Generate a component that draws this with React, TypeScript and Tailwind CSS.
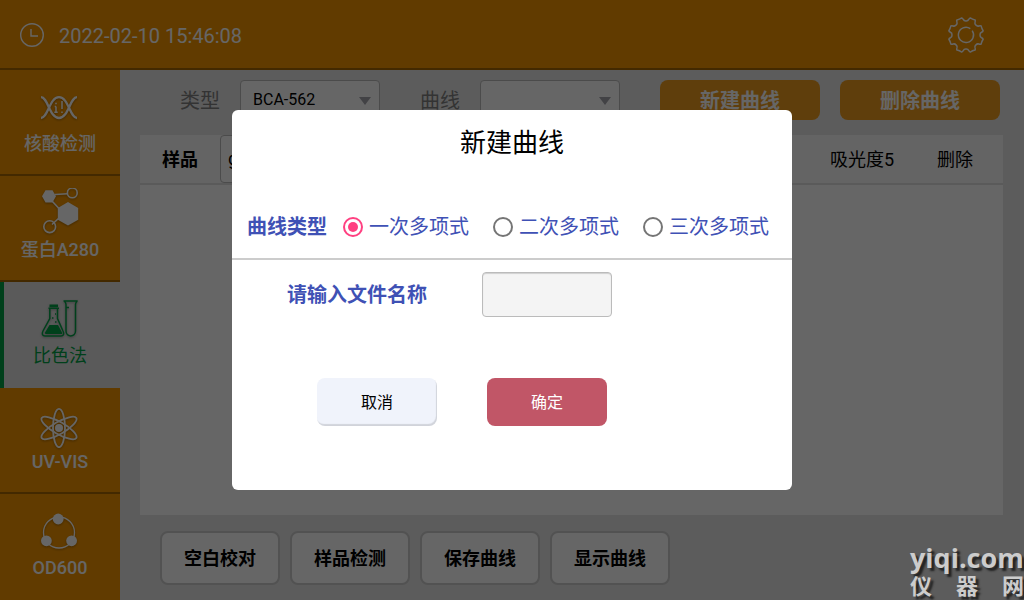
import { useState } from 'react'
import type { ReactNode } from 'react'

const ICON = 'h-12 w-10 drop-shadow-[0_1px_1px_rgba(0,0,0,0.3)]'

function DnaIcon() {
  return (
    <svg viewBox="0 0 40 48" className={ICON} fill="none" stroke="currentColor" strokeWidth="2.3" aria-hidden="true">
      <path d="M1 15.200C8 15.200 9.500 36 19 36S30 15.200 37 15.200" />
      <path d="M1 36C8 36 9.500 15.200 19 15.200S30 36 37 36" />
      <path d="M16 24.500v5.800M14.300 30.300h3.400M14.700 24.500H16M16 20.800v1.500M22 19v8M22 29.500v1.600" strokeWidth="1.500" />
    </svg>
  )
}

function MoleculeIcon() {
  return (
    <svg viewBox="0 0 40 48" className={ICON} fill="none" stroke="currentColor" strokeWidth="1.6" aria-hidden="true">
      <path d="M2 8.300l3.500-6.100h7L16 8.300l-3.500 6.100h-7z" fill="currentColor" stroke="none" />
      <path d="M28 14l10.200 5.900v11.800L28 37.500l-10.200-5.800V19.900z" fill="currentColor" stroke="none" />
      <circle cx="32.300" cy="4.900" r="4.900" />
      <circle cx="9.700" cy="38.700" r="5.900" />
      <path d="M15 6.500l12.500-.7M12 13l7 7.500M12 36.500l7-6.500" />
    </svg>
  )
}

function FlaskIcon() {
  return (
    <svg viewBox="0 0 40 48" className={ICON} fill="none" stroke="currentColor" strokeWidth="1.5" aria-hidden="true">
      <path d="M9.500 11.800h8.500" strokeWidth="2.600" />
      <path d="M8.500 14.300h10.500M9.800 15v9.500L3 37c-1.500 3-.5 5 2 5h16c2.500 0 3.500-2 2-5l-5.500-12.500V15" />
      <path d="M9.500 31h8.500l4 7.500c.5 1 0 1.500-.8 1.500H6c-1 0-1.500-.8-1-1.500z" fill="currentColor" stroke="none" />
      <path d="M12 24h1.500M15 28h1.500M15 20h1" />
      <path d="M23.500 7h14.200M24.500 7.500c1.500 1 1.500 2 1.500 3V37c0 6.500 9.500 6.500 9.500 0V10.500c0-1 0-2 1.500-3M26 13.500h3" />
    </svg>
  )
}

function AtomIcon() {
  return (
    <svg viewBox="0 0 40 48" className={ICON} fill="none" stroke="currentColor" strokeWidth="1.8" aria-hidden="true">
      <ellipse cx="19" cy="28" rx="6" ry="19.200" />
      <ellipse cx="19" cy="28" rx="6" ry="20" transform="rotate(60 19 28)" />
      <ellipse cx="19" cy="28" rx="6" ry="20" transform="rotate(-60 19 28)" />
      <circle cx="19" cy="28" r="4" fill="currentColor" stroke="none" />
    </svg>
  )
}

function OrbitIcon() {
  return (
    <svg viewBox="0 0 40 48" className={ICON} fill="none" stroke="currentColor" strokeWidth="1.3" aria-hidden="true">
      <circle cx="19" cy="26.500" r="15.500" />
      <g fill="currentColor" stroke="none">
        <circle cx="18.200" cy="13" r="5.400" />
        <circle cx="6.400" cy="34.800" r="5.400" />
        <circle cx="31.600" cy="34.800" r="5.400" />
      </g>
    </svg>
  )
}

function ClockIcon() {
  return (
    <svg viewBox="0 0 24 24" className="size-6" fill="none" stroke="currentColor" strokeWidth="1.400" aria-hidden="true">
      <circle cx="12" cy="12" r="11.300" />
      <path d="M11 6v7h7" />
    </svg>
  )
}

// eight teeth, each step draws one notch and the tooth to its right
const gearPath = () => {
  const at = (deg: number, r: number) => {
    const a = (deg - 90) * (Math.PI / 180)
    return `${(18 + r * Math.cos(a)).toFixed(2)} ${(18 + r * Math.sin(a)).toFixed(2)}`
  }
  let d = `M${at(-14, 17.6)}`
  for (let k = 0; k < 360; k += 45) {
    d += `Q${at(k - 11, 17.2)} ${at(k - 10, 15.8)}Q${at(k - 8, 14)} ${at(k, 14)}`
    d += `Q${at(k + 8, 14)} ${at(k + 10, 15.8)}Q${at(k + 11, 17.2)} ${at(k + 14, 17.6)}`
    d += `Q${at(k + 22.5, 17)} ${at(k + 31, 17.6)}`
  }
  return d + 'Z'
}

function GearIcon() {
  return (
    <svg viewBox="0 0 36 36" className="size-9" fill="none" stroke="currentColor" strokeWidth="1.500" aria-hidden="true">
      <path d={gearPath()} />
      <path d="M22.300 11.700A7.600 7.600 0 1 0 24.200 13.600" />
    </svg>
  )
}

const navItems: { id: string; label: string; icon: ReactNode }[] = [
  { id: 'dna', label: '核酸检测', icon: <DnaIcon /> },
  { id: 'a280', label: '蛋白A280', icon: <MoleculeIcon /> },
  { id: 'color', label: '比色法', icon: <FlaskIcon /> },
  { id: 'uv', label: 'UV-VIS', icon: <AtomIcon /> },
  { id: 'od', label: 'OD600', icon: <OrbitIcon /> },
]

const curveTypes = ['一次多项式', '二次多项式', '三次多项式']
const actions = ['空白校对', '样品检测', '保存曲线', '显示曲线']

function Picker({ id, label, options }: { id: string; label: string; options: string[] }) {
  return (
    <div className="flex items-center gap-5">
      <label htmlFor={id} className="pt-0.5 text-xl text-[#808080]">{label}</label>
      <div className="relative">
        <select id={id} className="h-10 w-35 appearance-none rounded border border-[#bbb] bg-white pl-3 text-base text-black">
          {options.map(o => <option key={o}>{o}</option>)}
        </select>
        <svg viewBox="0 0 12 8" className="pointer-events-none absolute top-[17px] right-[9px] h-2 w-3 fill-[#a5a5ad]" aria-hidden="true">
          <path d="M0 0h12L6 8z" />
        </svg>
      </div>
    </div>
  )
}

export default function App() {
  const [active, setActive] = useState('color')
  const [curveType, setCurveType] = useState(curveTypes[0])
  const [fileName, setFileName] = useState('')
  const [open, setOpen] = useState(true)

  return (
    <div className="relative flex min-h-screen flex-col overflow-hidden bg-[#e6e6e6] font-[Roboto,'Noto_Sans_CJK_SC',sans-serif] text-black">
      {/* Header */}
      <header className="flex h-[70px] items-center justify-between border-b-2 border-[#a86600] bg-[#f39500] pt-0.5 pr-10 pl-5 text-white">
        <div className="flex items-center gap-[15px]">
          <ClockIcon />
          <time className="pt-0.5 text-xl">2022-02-10 15:46:08</time>
        </div>
        <button type="button" aria-label="设置"><GearIcon /></button>
      </header>

      <div className="flex flex-1">
        {/* Sidebar */}
        <nav className="flex w-30 shrink-0 flex-col">
          {navItems.map(item => (
            <button
              key={item.id}
              type="button"
              onClick={() => setActive(item.id)}
              className={
                item.id === active
                  ? 'flex flex-1 flex-col items-center justify-center border-l-4 border-[#00a045] bg-[#e0e0e0] pr-1 pb-1.5 text-lg leading-7 text-[#00a045]'
                  : 'flex flex-1 flex-col items-center justify-center border-b-2 border-[#a86600] bg-[#f39500] pb-1 text-lg leading-7 font-medium text-white last:border-b-0 last:pb-1.5'
              }
            >
              {item.icon}
              {item.label}
            </button>
          ))}
        </nav>

        <main className="flex flex-1 flex-col pt-2.5 pr-[21px] pb-[15px] pl-5">
          {/* Toolbar */}
          <div className="flex gap-10 pl-10">
            <Picker id="kind" label="类型" options={['BCA-562']} />
            <Picker id="curve" label="曲线" options={['']} />
            <div className="flex gap-5">
              <button type="button" className="h-10 w-40 rounded-lg bg-[#ee9b1e] pt-0.5 text-xl font-bold text-white">新建曲线</button>
              <button type="button" className="h-10 w-40 rounded-lg bg-[#ee9b1e] pt-0.5 text-xl font-bold text-white">删除曲线</button>
            </div>
          </div>

          {/* Samples */}
          <div className="mt-[15px] flex-1 bg-white">
            <table className="w-full table-fixed text-lg">
              <thead>
                <tr className="h-[49px] border-b-2 border-[#e0e0e0] bg-[#fafafa]">
                  <th className="w-20 pt-0.5 font-bold">样品</th>
                  <th className="p-0 text-left align-top">
                    <select aria-label="单位" className="h-12 w-30 appearance-none rounded border border-[#bbb] bg-white pl-[7px] text-lg font-normal">
                      <option>g/L</option>
                    </select>
                  </th>
                  <th className="w-[90px] pt-0.5 font-normal">吸光度5</th>
                  <th className="w-24 pt-0.5 font-normal">删除</th>
                </tr>
              </thead>
            </table>
          </div>

          {/* Actions */}
          <div className="flex gap-2.5 pt-4 pl-5">
            {actions.map(a => (
              <button key={a} type="button" className="h-[54px] w-30 rounded-lg border-2 border-[#ccc] bg-white pt-0.5 text-lg font-bold">{a}</button>
            ))}
          </div>
        </main>
      </div>

      {/* New curve dialog */}
      {open && (
        <div className="absolute inset-0 flex items-center justify-center bg-black/60">
          <form
            role="dialog"
            aria-labelledby="dialog-title"
            onSubmit={e => { e.preventDefault(); setOpen(false) }}
            className="w-[560px] rounded-md bg-white pb-16"
          >
            <h2 id="dialog-title" className="pt-px text-center text-[26px] leading-16">新建曲线</h2>
            <fieldset className="mt-5 flex h-[63px] items-center gap-6 pr-4 pl-[15px] text-xl text-[#3f51b5]">
              <legend className="float-left -mr-2 font-bold">曲线类型</legend>
              {curveTypes.map(t => (
                <label key={t} className="flex items-center gap-1.5">
                  <input
                    type="radio"
                    name="curve-type"
                    checked={curveType === t}
                    onChange={() => setCurveType(t)}
                    className="size-5 appearance-none rounded-full border-2 border-[#757575] bg-clip-content p-[3px] checked:border-[#ff4081] checked:bg-[#ff4081]"
                  />
                  {t}
                </label>
              ))}
            </fieldset>
            <div className="flex items-center justify-between border-t-2 border-[#ccc] pt-3 pr-45 pl-[55px]">
              <label htmlFor="file-name" className="text-xl font-bold text-[#3f51b5]">请输入文件名称</label>
              <input
                id="file-name"
                type="text"
                value={fileName}
                onChange={e => setFileName(e.target.value)}
                className="h-[45px] w-[130px] rounded border border-[#bbb] bg-[#f4f4f4] px-2 text-base shadow-[inset_0_1px_1px_rgba(0,0,0,0.15)]"
              />
            </div>
            <div className="mt-[61px] flex gap-[50px] pl-[85px]">
              <button type="button" onClick={() => setOpen(false)} className="h-12 w-30 rounded-lg bg-[#f0f3fb] pt-0.5 text-base shadow-[inset_-1px_-2px_1px_rgba(0,0,0,0.13)]">取消</button>
              <button type="submit" className="h-12 w-30 rounded-lg bg-[#c15667] pt-0.5 text-base text-white">确定</button>
            </div>
          </form>
        </div>
      )}

      {/* Site mark */}
      <div className="pointer-events-none absolute right-0 bottom-0 w-[114px] font-bold whitespace-nowrap text-[#ccc] [text-shadow:3px_3px_2px_#222]">
        <div className="font-['Open_Sans','Noto_Sans',sans-serif] text-[27px] leading-6">yiqi.com</div>
        <div className="flex justify-between pb-0.5 font-['Noto_Sans_CJK_SC',sans-serif] text-[22px] leading-7">
          <span>仪</span>
          <span>器</span>
          <span>网</span>
        </div>
      </div>
    </div>
  )
}
